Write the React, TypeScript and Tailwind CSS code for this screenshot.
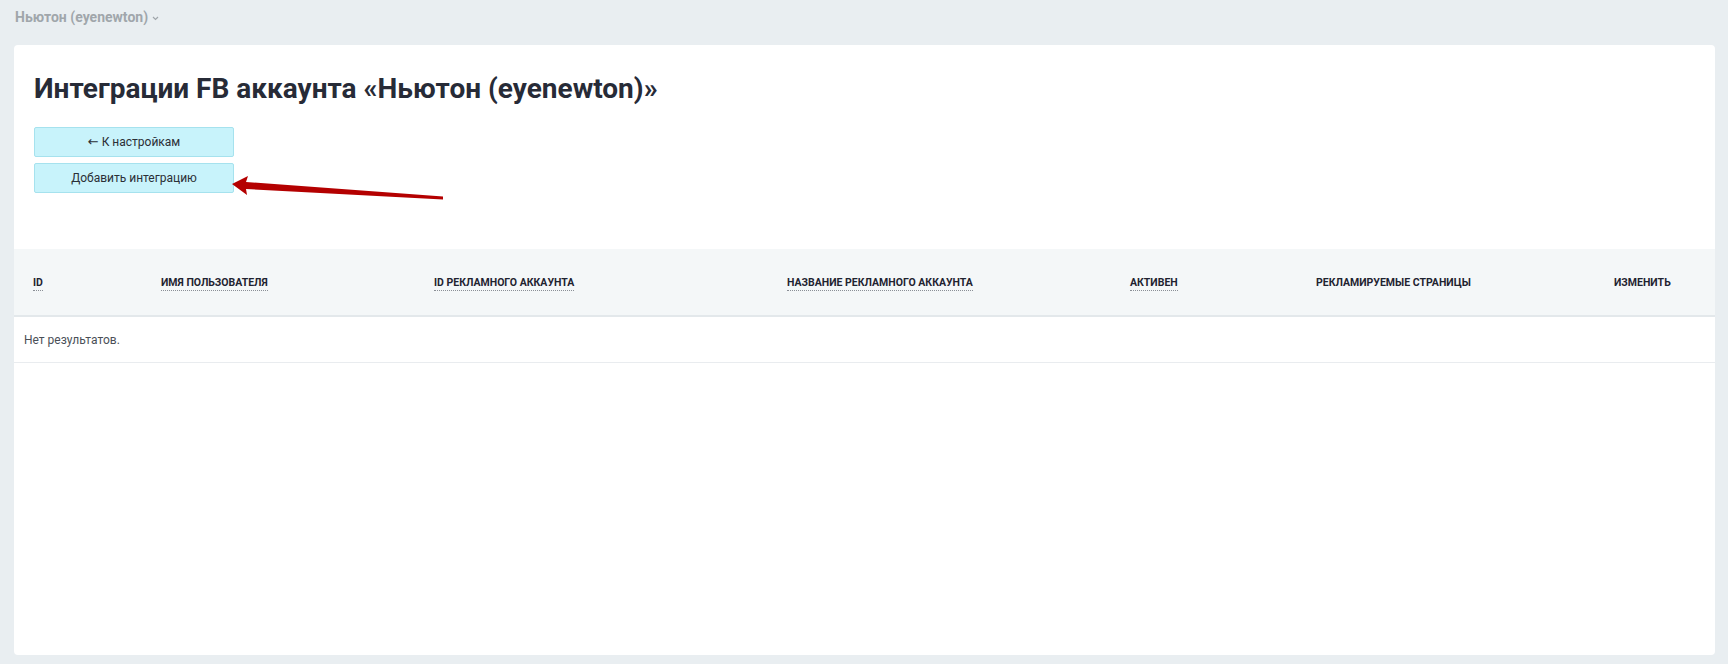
import React from "react";

const cols: { label: string; w: string; dotted: boolean }[] = [
  { label: "ID", w: "w-[128px]", dotted: true },
  { label: "ИМЯ ПОЛЬЗОВАТЕЛЯ", w: "w-[273px]", dotted: true },
  { label: "ID РЕКЛАМНОГО АККАУНТА", w: "w-[353px]", dotted: true },
  { label: "НАЗВАНИЕ РЕКЛАМНОГО АККАУНТА", w: "w-[343px]", dotted: true },
  { label: "АКТИВЕН", w: "w-[186px]", dotted: true },
  { label: "РЕКЛАМИРУЕМЫЕ СТРАНИЦЫ", w: "w-[298px]", dotted: false },
  { label: "ИЗМЕНИТЬ", w: "w-[120px]", dotted: false },
];

export default function App() {
  return (
    <div
      className="h-screen w-full bg-[#e9eef1] flex flex-col"
      style={{ fontFamily: "Roboto, 'Noto Sans', sans-serif" }}
    >
      <div className="h-[45px] shrink-0 pl-[15px] pt-[9px]">
        <div className="flex items-center gap-[4px] text-[14px] leading-[17px] font-bold text-[#a0a6ab]">
          <span>Ньютон (eyenewton)</span>
          <svg width="7" height="5" viewBox="0 0 7 5" className="mt-[2px]">
            <path d="M1 1 L3.5 3.5 L6 1" fill="none" stroke="#a0a6ab" strokeWidth="1.2" />
          </svg>
        </div>
      </div>

      <div className="relative flex-1 ml-[14px] mr-[13px] mb-[9px] bg-white rounded-[4px] flex flex-col">
        <div className="pl-[20px] pt-[27px]">
          <h1 className="text-[28px] leading-[34px] font-bold text-[#272b37]">
            Интеграции FB аккаунта «Ньютон (eyenewton)»
          </h1>
          <div className="mt-[21px] flex flex-col gap-[6px]">
            <button className="w-[200px] h-[30px] rounded-[2px] bg-[#c8f3fb] border border-[#a6e2ee] text-[12px] text-[#2b2f36]">
              <span className="text-[13px]" style={{ fontFamily: "'DejaVu Sans', sans-serif" }}>←</span> К настройкам
            </button>
            <button className="w-[200px] h-[30px] rounded-[2px] bg-[#c8f3fb] border border-[#a6e2ee] text-[12px] text-[#2b2f36]">
              Добавить интеграцию
            </button>
          </div>
        </div>

        <div className="mt-[56px]">
          <div className="flex h-[68px] bg-[#f4f7f8] border-b-2 border-[#e3e8eb]">
            {cols.map((c) => (
              <div key={c.label} className={`${c.w} shrink-0 pl-[19px] pt-[3px] flex items-center`}>
                <span
                  className={
                    c.dotted
                      ? "text-[10.5px] leading-[14px] font-bold text-[#1f2330] border-b border-dotted border-[#8a8f96]"
                      : "text-[10.5px] leading-[14px] font-bold text-[#1f2330] border-b border-transparent"
                  }
                >
                  {c.label}
                </span>
              </div>
            ))}
          </div>
          <div className="h-[46px] border-b border-[#e9ecef] pl-[10px] flex items-center text-[12px] text-[#4a4f57]">
            Нет результатов.
          </div>
        </div>

        <svg
          className="absolute left-0 top-0 pointer-events-none"
          width="460"
          height="220"
          viewBox="0 0 460 220"
        >
          <polygon
            points="218,139 234,131 232,137 429,151.5 429,154.5 232,144 233,150"
            fill="#b40000"
          />
        </svg>
      </div>
    </div>
  );
}
